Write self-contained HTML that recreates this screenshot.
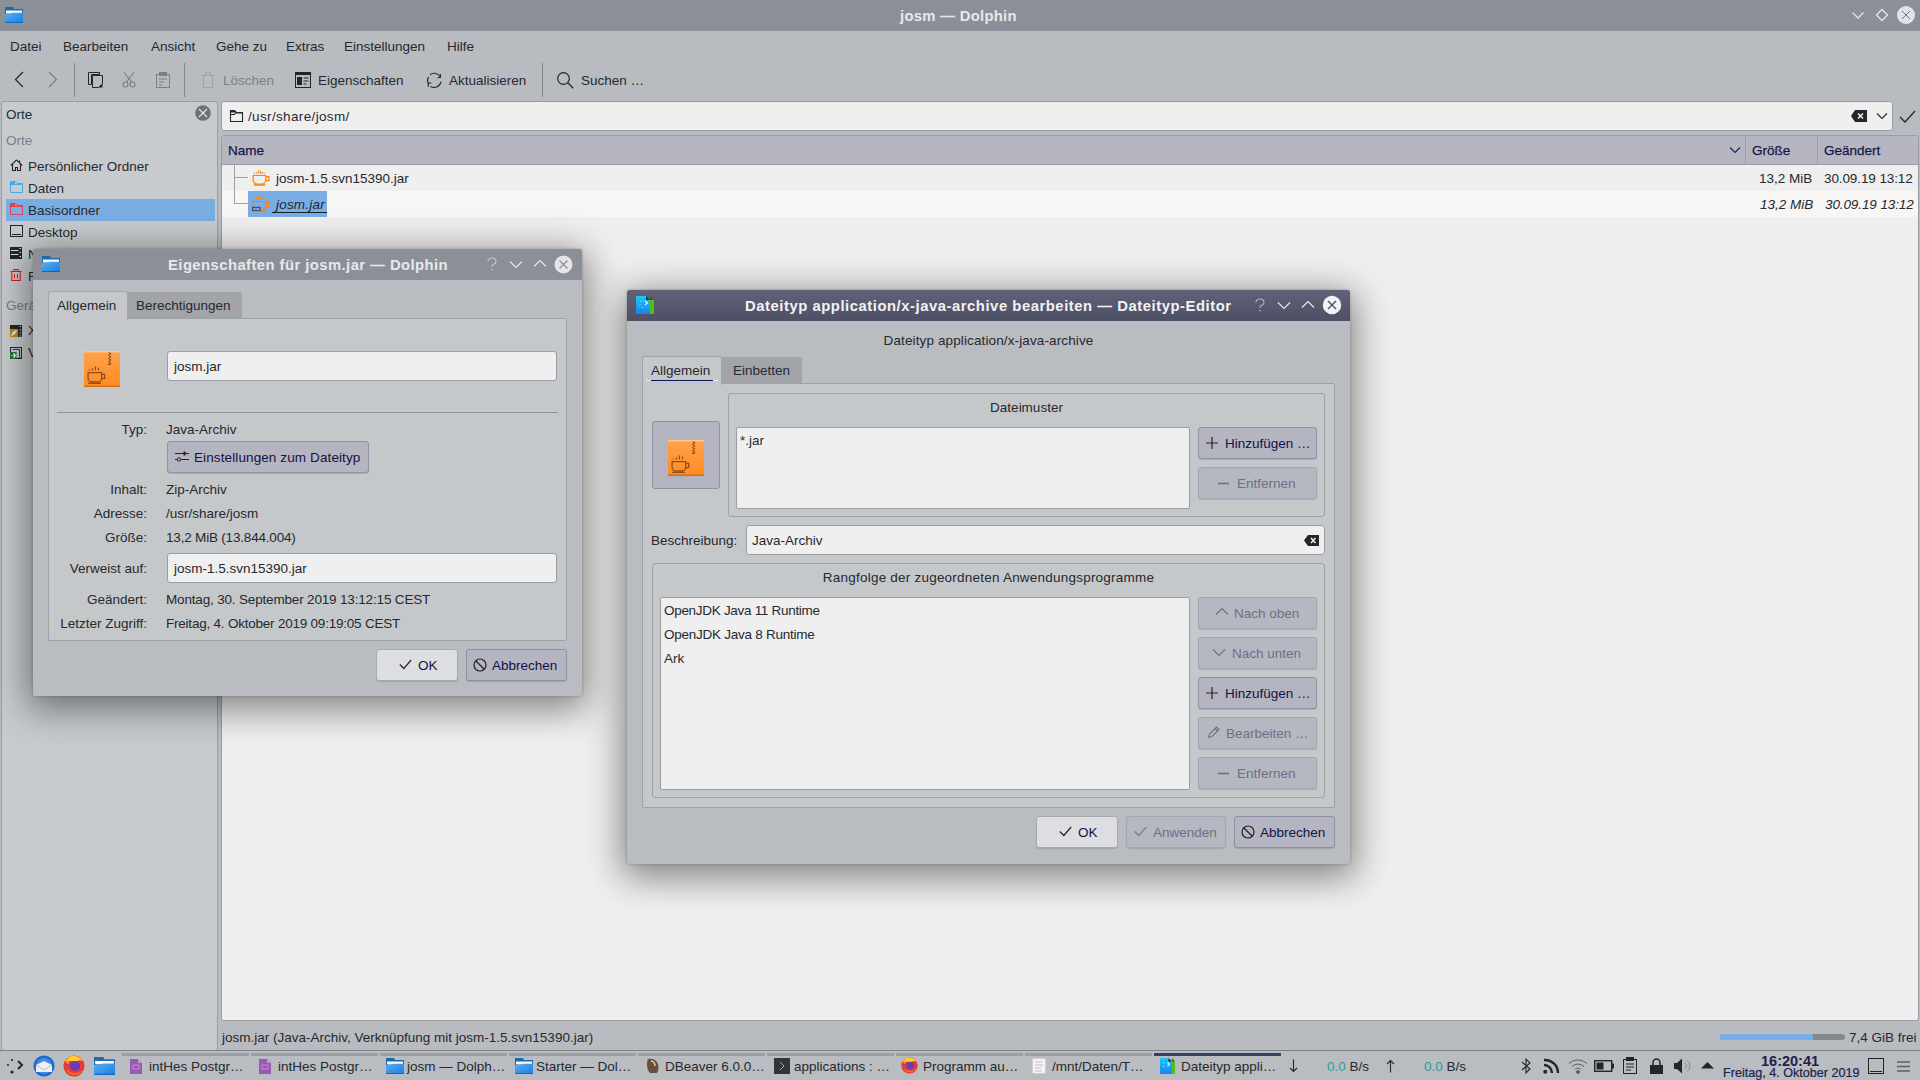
<!DOCTYPE html>
<html><head><meta charset="utf-8">
<style>
*{box-sizing:border-box;margin:0;padding:0}
html,body{width:1920px;height:1080px;overflow:hidden}
body{position:relative;background:#b8bbc0;font-family:"Liberation Sans",sans-serif;font-size:13.5px;color:#26292d}
.a{position:absolute}
.t{position:absolute;white-space:pre;line-height:18px}
svg{position:absolute;overflow:visible}
/* title bars */
.tb{position:absolute;background:#8b8f98}
.ttl{position:absolute;white-space:pre;font-weight:bold;font-size:14.8px;letter-spacing:0.3px;color:#e8e8ea;line-height:18px}
.menu .t{top:38px}
.panel{position:absolute;background:#c6c9cc;border:1px solid #a6a9ae;border-radius:3px}
.inp{position:absolute;background:#efefef;border:1px solid #9a9da3;border-radius:3px}
.btn{position:absolute;background:#b4b5c0;border:1px solid #8e90a4;border-radius:3px;box-shadow:0 1px 1px rgba(0,0,0,0.12)}
.btn.light{background:#dddee1;border-color:#a8aab0}
.btn.dis{background:#b6b8c1;border-color:#a3a5b3}
.btxt{color:#12124a}
.dis .t{color:#6c7086}
.tab{position:absolute;background:#a2a4a9;border:1px solid #a0a3a8;border-bottom:none;border-radius:3px 3px 0 0}
.tab.act{background:#c5c8cb;border-color:#a2a5aa}
.tabpanel{position:absolute;background:#c5c8cb;border:1px solid #9ea1a6;border-radius:2px}
.grp{position:absolute;border:1px solid #9ea1a6;border-radius:3px}
.hdr{color:#16164e;-webkit-text-stroke:0.25px #16164e}
.row{position:absolute;left:0;right:0;height:26px}
</style></head>
<body>
<svg width="0" height="0" style="position:absolute"><defs>
<linearGradient id="og" x1="0" y1="0" x2="0" y2="1"><stop offset="0" stop-color="#ffa24c"/><stop offset="1" stop-color="#ff8b22"/></linearGradient>
<symbol id="jar" viewBox="0 0 36 36">
<rect width="36" height="36" fill="url(#og)"/>
<rect width="36" height="1.5" fill="#ffc78c"/>
<rect y="34.5" width="36" height="1.5" fill="#d96c12"/>
<path d="M24.8 1.5l1.8 1.5-1.8 1.5 1.8 1.5-1.8 1.5 1.8 1.5-1.8 1.5 1.8 1.5-1.8 1.5h2" stroke="#8f4f18" stroke-width="1.1" fill="none"/>
<path d="M5.3 19.6v-1.2M8.4 19.6v-2.4M11.4 19.6v-4.2M14.5 19.6v-3" stroke="#8f4f18" stroke-width="1.2"/>
<path d="M4.1 21.7h13.6v5.2a4 4 0 0 1-4 4H8.1a4 4 0 0 1-4-4z" fill="none" stroke="#8f4f18" stroke-width="1.3"/>
<path d="M17.7 23.3h3v4.4h-3" fill="none" stroke="#8f4f18" stroke-width="1.3"/>
<path d="M4.8 32.3h11.5" stroke="#8f4f18" stroke-width="1.4" stroke-linecap="round"/>
</symbol>
<linearGradient id="fg" x1="0" y1="0" x2="1" y2="1"><stop offset="0" stop-color="#55aef2"/><stop offset="1" stop-color="#1a7ee3"/></linearGradient>
<symbol id="fold" viewBox="0 0 18 16">
<path d="M0 0h8l1 2h9v5H0z" fill="#1e6aa6"/>
<path d="M1 3.5h16v3H1z" fill="#fbfbfb"/>
<path d="M0 7h6l1.2-1.2H18V16H0z" fill="url(#fg)"/>
<rect x="0" y="15" width="18" height="1" fill="#1466c4"/>
</symbol><symbol id="cup" viewBox="0 0 18 18">
<path d="M2.4 4.7v-0.9M4.4 4.7v-1.8M6.7 4.7V0.9M8.7 4.7V2.1M10.7 4.7V2.9M12.4 4.7v-0.9" stroke="#ff8000" stroke-width="1.1"/>
<path d="M1.2 6.5h12.6V11a4 4 0 0 1-4 4H5.2a4 4 0 0 1-4-4z" fill="none" stroke="#ff8000" stroke-width="1.2"/>
<path d="M13.8 7.6H16.9v4h-3.1" fill="none" stroke="#ff8000" stroke-width="1.2"/>
<path d="M2.4 16h10.2" stroke="#ff8000" stroke-width="1.5" stroke-linecap="round"/>
</symbol></defs></svg>

<!-- ========== MAIN WINDOW ========== -->
<div class="tb" style="left:0;top:0;width:1920px;height:31px"></div>
<!-- app icon -->
<svg style="left:5px;top:7px" width="18" height="16"><use href="#fold"/></svg>
<div class="ttl" style="left:900px;top:7px">josm — Dolphin</div>
<!-- window buttons -->
<svg style="left:1851px;top:10px" width="14" height="10"><path d="M1.5 2.5l5.5 5.5 5.5-5.5" stroke="#e6e6e8" stroke-width="1.3" fill="none"/></svg>
<svg style="left:1875px;top:8px" width="14" height="14"><path d="M7 1.5l5.5 5.5-5.5 5.5-5.5-5.5z" stroke="#e6e6e8" stroke-width="1.3" fill="none"/></svg>
<svg style="left:1896px;top:5px" width="21" height="21"><circle cx="10" cy="10" r="9" fill="#e3e3e5"/><path d="M6 6l8 8M14 6l-8 8" stroke="#6e727a" stroke-width="1"/></svg>

<!-- menu -->
<div class="menu">
 <div class="t" style="left:10px">Datei</div>
 <div class="t" style="left:63px">Bearbeiten</div>
 <div class="t" style="left:151px">Ansicht</div>
 <div class="t" style="left:216px">Gehe zu</div>
 <div class="t" style="left:286px">Extras</div>
 <div class="t" style="left:344px">Einstellungen</div>
 <div class="t" style="left:447px">Hilfe</div>
</div>

<!-- toolbar -->
<div id="toolbar">
 <svg style="left:14px;top:71px" width="10" height="17"><path d="M9 1L1.5 8.5 9 16" stroke="#232629" stroke-width="1.2" fill="none"/></svg>
 <svg style="left:48px;top:71px" width="10" height="17"><path d="M1 1l7.5 7.5L1 16" stroke="#7c7f85" stroke-width="1.2" fill="none"/></svg>
 <div class="a" style="left:74px;top:63px;width:1px;height:34px;background:#85888d"></div>
 <svg style="left:88px;top:72px" width="15" height="16"><path d="M0.5 0.5h11v2h-8v10h-3z" fill="none" stroke="#232629" stroke-width="1"/><path d="M4.5 3.5h10v8l-4 4h-6z" fill="#b8bbc0" stroke="#232629" stroke-width="1"/><path d="M14.5 11.5v4h-4z" fill="#232629"/></svg>
 <svg style="left:122px;top:72px" width="15" height="16"><path d="M2 0.5l8 10M12 0.5l-8 10" stroke="#7c7f85" stroke-width="1.1" fill="none"/><circle cx="3.5" cy="12.5" r="2.5" fill="none" stroke="#7c7f85" stroke-width="1.1"/><circle cx="10.5" cy="12.5" r="2.5" fill="none" stroke="#7c7f85" stroke-width="1.1"/></svg>
 <svg style="left:156px;top:72px" width="14" height="16"><rect x="0.5" y="2.5" width="13" height="13" fill="none" stroke="#7c7f85"/><rect x="3" y="0" width="8" height="4" fill="#7c7f85"/><path d="M3 7h8M3 10h5M3 13h3" stroke="#7c7f85" stroke-width="1"/></svg>
 <div class="a" style="left:184px;top:63px;width:1px;height:34px;background:#85888d"></div>
 <svg style="left:201px;top:72px" width="14" height="16"><path d="M0.5 3.5h13M4.5 3.5v-2.5h5v2.5M2.5 3.5v12h9v-12" fill="none" stroke="#9fa2a8" stroke-width="1"/></svg>
 <div class="t" style="left:223px;top:72px;color:#7d8187">Löschen</div>
 <svg style="left:295px;top:72px" width="16" height="16"><rect x="0.5" y="0.5" width="15" height="15" fill="none" stroke="#232629"/><rect x="0" y="0" width="16" height="3" fill="#232629"/><rect x="2" y="5" width="5" height="8" fill="#232629"/><path d="M8.5 6h5M8.5 9h5M8.5 12h3" stroke="#232629"/></svg>
 <div class="t" style="left:318px;top:72px">Eigenschaften</div>
 <svg style="left:426px;top:72px" width="17" height="17"><path d="M4 2.8A7 7 0 0 1 14.6 5.2M15 9.5A7 7 0 0 1 4.5 14.5M2.2 11.5A7 7 0 0 1 2.5 5" fill="none" stroke="#232629" stroke-width="1.1"/><path d="M14.6 5.2l-0.2-3.2M14.6 5.2l-3 0.6M2.2 11.5l0.2 3.2M2.2 11.5l3-0.6" stroke="#232629" stroke-width="1.1"/></svg>
 <div class="t" style="left:449px;top:72px">Aktualisieren</div>
 <div class="a" style="left:542px;top:63px;width:1px;height:34px;background:#85888d"></div>
 <svg style="left:557px;top:72px" width="17" height="17"><circle cx="6.5" cy="6.5" r="5.8" fill="none" stroke="#232629" stroke-width="1.2"/><path d="M10.8 10.8l5.5 5.5" stroke="#232629" stroke-width="1.3"/></svg>
 <div class="t" style="left:581px;top:72px">Suchen …</div>
</div>

<!-- sidebar -->
<div id="sidebar">
 <div class="a" style="left:1px;top:101px;width:217px;height:950px;background:#c8cbce;border:1px solid #9a9da3;border-radius:3px"></div>
 <div class="t" style="left:6px;top:106px">Orte</div>
 <svg style="left:195px;top:105px" width="16" height="16"><circle cx="8" cy="8" r="7.8" fill="#6c7078"/><path d="M4 4l8 8M12 4l-8 8" stroke="#e3e4e6" stroke-width="1.1"/></svg>
 <div class="t" style="left:6px;top:132px;color:#7a7e84">Orte</div>
 <div class="a" style="left:6px;top:199px;width:209px;height:22px;background:#79ade3"></div>
 <svg style="left:10px;top:159px" width="13" height="12"><path d="M6.5 0.8L0.8 6.5M6.5 0.8l5.7 5.7M9.5 1.5v3M2.5 5v6.5h3v-3h2v3h3V5" fill="none" stroke="#232629" stroke-width="1.1"/></svg>
 <div class="t" style="left:28px;top:158px">Persönlicher Ordner</div>
 <svg style="left:10px;top:181px" width="13" height="12"><path d="M0.5 0.5h5l2 2h5v9h-12z" fill="none" stroke="#3daee9"/><path d="M0.5 3.5h12" stroke="#3daee9"/><path d="M1 1h4v2H1z" fill="#3daee9"/></svg>
 <div class="t" style="left:28px;top:180px">Daten</div>
 <svg style="left:10px;top:203px" width="13" height="12"><path d="M0.5 0.5h5l2 2h5v9h-12z" fill="none" stroke="#da4453"/><path d="M0.5 3.5h12" stroke="#da4453"/><path d="M1 1h4v2H1z" fill="#da4453"/></svg>
 <div class="t" style="left:28px;top:202px">Basisordner</div>
 <svg style="left:10px;top:225px" width="13" height="12"><rect x="0.5" y="0.5" width="12" height="11" fill="none" stroke="#232629"/><path d="M2 9.5h9" stroke="#232629"/></svg>
 <div class="t" style="left:28px;top:224px">Desktop</div>
 <svg style="left:10px;top:247px" width="12" height="12"><rect width="12" height="12" fill="#232629"/><path d="M1 3.5h7.5M1 7.5h7.5" stroke="#e0e0e0" stroke-width="1"/><path d="M9.5 1.5h1.5M9.5 5.5h1.5M9.5 9.5h1.5" stroke="#e0e0e0" stroke-width="1"/></svg>
 <div class="t" style="left:28px;top:246px">N</div>
 <svg style="left:10px;top:269px" width="12" height="12"><path d="M0.5 2.5h11M4 2.5V0.5h4v2M1.8 2.5v9h8.4v-9M4.5 5v4.5M7.5 5v4.5" fill="none" stroke="#da1b1b" stroke-width="1.1"/></svg>
 <div class="t" style="left:28px;top:268px">F</div>
 <div class="t" style="left:6px;top:297px;color:#7a7e84">Gerä</div>
 <svg style="left:10px;top:325px" width="12" height="12"><rect width="12" height="12" fill="#232629"/><rect x="0" y="4" width="8" height="8" fill="#b88c1c"/><path d="M1.5 10.5l5-5" stroke="#f0f0f0" stroke-width="1.4"/><circle cx="4" cy="8" r="1.4" fill="#f0f0f0"/><path d="M9.5 1.5h1.5M9.5 5h1.5M9.5 8h1.5M9.5 11h1.5" stroke="#e0e0e0"/></svg>
 <div class="t" style="left:28px;top:322px">X</div>
 <svg style="left:10px;top:347px" width="12" height="12"><rect x="0.5" y="0.5" width="11" height="11" fill="none" stroke="#232629"/><path d="M2.5 2.5h7v7" fill="none" stroke="#232629" stroke-width="0.9"/><rect x="0" y="5" width="6.5" height="7" fill="#1e7a32"/><path d="M1.5 8.5h1M4 6.8a1.8 1.8 0 0 1 0 3.4z" stroke="#f0f0f0" fill="#f0f0f0" stroke-width="1.1"/><path d="M8 11h3" stroke="#232629"/></svg>
 <div class="t" style="left:28px;top:344px">V</div>
</div>

<!-- location bar -->
<div id="loc">
 <div class="a" style="left:221px;top:101px;width:1672px;height:30px;background:#efefef;border:1px solid #9a9da3;border-radius:3px"></div>
 <svg style="left:230px;top:110px" width="13" height="12"><path d="M0.5 0.5h4l2 2h6v9h-12z" fill="none" stroke="#232629" stroke-width="1.1"/><path d="M0 0h4.5l2 2.5H0z" fill="#232629"/><path d="M0.5 4.5h4l1-1.5h7" stroke="#232629" stroke-width="1.1" fill="none"/></svg>
 <div class="t" style="left:248px;top:108px;letter-spacing:0.35px">/usr/share/josm/</div>
 <svg style="left:1851px;top:110px" width="16" height="12"><path d="M0 6l4-6h12v12H4z" fill="#232629"/><path d="M7 3.5l5 5M12 3.5l-5 5" stroke="#efefef" stroke-width="1.6"/></svg>
 <svg style="left:1876px;top:112px" width="12" height="8"><path d="M1 1.5l5 5 5-5" stroke="#232629" stroke-width="1.1" fill="none"/></svg>
 <svg style="left:1899px;top:110px" width="17" height="13"><path d="M1 7l5 5L16 1" stroke="#232629" stroke-width="1.3" fill="none"/></svg>
</div>

<!-- file panel -->
<div id="files">
 <div class="a" style="left:221px;top:135px;width:1698px;height:886px;background:#efefef;border:1px solid #9a9da3;border-radius:3px;overflow:hidden">
  <div class="a" style="left:0;top:0;width:1697px;height:29px;background:#b5b6bf;border-bottom:1px solid #9a9ca6"></div>
  <div class="a" style="left:1523px;top:0;width:1px;height:29px;background:#9c9eaa"></div>
  <div class="a" style="left:1595px;top:0;width:1px;height:29px;background:#9c9eaa"></div>
  <div class="a" style="left:0;top:55px;width:1697px;height:26px;background:#f7f6f4"></div>
 </div>
 <div class="t hdr" style="left:228px;top:142px">Name</div>
 <svg style="left:1729px;top:146px" width="12" height="8"><path d="M1 1.5l5 5 5-5" stroke="#1d1d5b" stroke-width="1.1" fill="none"/></svg>
 <div class="t hdr" style="left:1752px;top:142px">Größe</div>
 <div class="t hdr" style="left:1824px;top:142px">Geändert</div>
 <div class="a" style="left:234px;top:165px;width:1px;height:38px;background:#9ea1a6"></div>
 <div class="a" style="left:234px;top:177px;width:14px;height:1px;background:#9ea1a6"></div>
 <div class="a" style="left:234px;top:203px;width:14px;height:1px;background:#9ea1a6"></div>
 <svg style="left:252px;top:169px" width="18" height="18"><use href="#cup"/></svg>
 <div class="t" style="left:276px;top:170px">josm-1.5.svn15390.jar</div>
 <div class="t" style="left:1759px;top:170px">13,2 MiB</div>
 <div class="t" style="left:1824px;top:170px;letter-spacing:-0.1px">30.09.19 13:12</div>
 <div class="a" style="left:248px;top:191px;width:79px;height:26px;background:#79ade5"></div>
 <svg style="left:252px;top:195px" width="18" height="18"><use href="#cup"/><rect x="0.5" y="12.3" width="7.5" height="3.4" fill="#6b8fb8" stroke="#3d4248" stroke-width="0.9"/><path d="M2 14h1M5 14h1.5" stroke="#d8e4f0" stroke-width="0.9"/></svg>
 <div class="t" style="left:276px;top:196px;font-style:italic;color:#232629;letter-spacing:0.2px">josm.jar</div>
 <div class="a" style="left:272px;top:212px;width:55px;height:1px;background:#1d2024"></div>
 <div class="t" style="left:1760px;top:196px;font-style:italic">13,2 MiB</div>
 <div class="t" style="left:1825px;top:196px;font-style:italic;letter-spacing:-0.1px">30.09.19 13:12</div>
</div>

<!-- status bar -->
<div id="status">
 <div class="t" style="left:222px;top:1029px">josm.jar (Java-Archiv, Verknüpfung mit josm-1.5.svn15390.jar)</div>
 <div class="a" style="left:1720px;top:1034px;width:125px;height:6px;background:#85888e;border-radius:3px"></div>
 <div class="a" style="left:1720px;top:1034px;width:93px;height:6px;background:#79ade5;border-radius:3px 0 0 3px"></div>
 <div class="t" style="left:1849px;top:1029px">7,4 GiB frei</div>
</div>

<!-- taskbar -->
<div id="taskbar">
<div class="a" style="left:0;top:1050px;width:1920px;height:1px;background:#7f8287"></div>
<div class="a" style="left:0;top:1051px;width:1920px;height:29px;background:#b9bcc1"></div>
<svg style="left:6px;top:1057px" width="17" height="17"><circle cx="2" cy="8" r="1" fill="#232629"/><circle cx="6" cy="3" r="1.1" fill="#232629"/><circle cx="6" cy="15" r="1.6" fill="#232629"/><path d="M12 4l4 4-4 4" stroke="#232629" stroke-width="2" fill="none"/></svg>
<svg style="left:33px;top:1055px" width="22" height="22"><circle cx="11" cy="11" r="10.5" fill="#1f6ac8"/><circle cx="11" cy="11" r="8" fill="#3c8ee8"/><path d="M3 10l8-4 8 4v7H3z" fill="#f0f0f0"/><path d="M3 10l8 5 8-5" stroke="#aab" fill="none" stroke-width="0.8"/></svg>
<svg style="left:63px;top:1055px" width="22" height="22" viewBox="0 0 22 22"><circle cx="11" cy="11" r="10.5" fill="#ff9a1f"/><path d="M11 0.5A10.5 10.5 0 0 1 21.5 11 10.5 10.5 0 0 1 11 21.5 10.5 10.5 0 0 1 0.5 11c0-2 .6-4 1.6-5.6C3 8 5 9 6 9c-1-2 0-5 2-6 3 0 6 1 7 3 2 2 2 5 1 7-1 3-4 4-7 4-3 0-5-2-6-4" fill="#e23b3e"/><circle cx="12" cy="11" r="5" fill="#6a3cb8"/><path d="M4 6c1-3 4-5 7-5 4 0 7 2 9 5-2-1-4-1-6 0" fill="#ffcf33"/><path d="M3 14c1 4 5 6 9 6 4 0 7-3 8-6-2 3-5 4-8 4-4 0-7-2-9-4z" fill="#ff6a1f"/></svg>
<svg style="left:94px;top:1057px" width="21" height="18" viewBox="0 0 18 16" preserveAspectRatio="none"><use href="#fold"/></svg>
<div class="a" style="left:122px;top:1053px;width:127px;height:3px;background:#9c9ea3"></div>
<svg style="left:130px;top:1059px" width="12" height="15"><path d="M0 0h8l4 4v11H0z" fill="#9b59b6"/><path d="M8 0v4h4z" fill="#c39bd3"/><rect x="3" y="6" width="6" height="4" fill="none" stroke="#c39bd3" stroke-width="0.8"/></svg>
<div class="t" style="left:149px;top:1058px">intHes Postgr…</div>
<div class="a" style="left:251px;top:1053px;width:127px;height:3px;background:#9c9ea3"></div>
<svg style="left:259px;top:1059px" width="12" height="15"><path d="M0 0h8l4 4v11H0z" fill="#9b59b6"/><path d="M8 0v4h4z" fill="#c39bd3"/><rect x="3" y="6" width="6" height="4" fill="none" stroke="#c39bd3" stroke-width="0.8"/></svg>
<div class="t" style="left:278px;top:1058px">intHes Postgr…</div>
<div class="a" style="left:380px;top:1053px;width:127px;height:3px;background:#9c9ea3"></div>
<svg style="left:386px;top:1058px" width="18" height="16"><use href="#fold"/></svg>
<div class="t" style="left:407px;top:1058px">josm — Dolph…</div>
<div class="a" style="left:509px;top:1053px;width:127px;height:3px;background:#9c9ea3"></div>
<svg style="left:515px;top:1058px" width="18" height="16"><use href="#fold"/></svg>
<div class="t" style="left:536px;top:1058px">Starter — Dol…</div>
<div class="a" style="left:638px;top:1053px;width:127px;height:3px;background:#9c9ea3"></div>
<svg style="left:645px;top:1058px" width="16" height="16"><path d="M3 1c3-1 7 0 9 3 2 3 2 8 0 11H5C2 12 1 6 3 1z" fill="#6b4f3a"/><path d="M6 3c2 0 4 2 4 5" stroke="#e8d8c0" stroke-width="1.5" fill="none"/></svg>
<div class="t" style="left:665px;top:1058px">DBeaver 6.0.0…</div>
<div class="a" style="left:767px;top:1053px;width:127px;height:3px;background:#9c9ea3"></div>
<svg style="left:774px;top:1058px" width="16" height="16"><rect width="16" height="16" fill="#31363b"/><path d="M6 4l4 4-4 4" stroke="#aaa" fill="none" stroke-width="1"/></svg>
<div class="t" style="left:794px;top:1058px">applications : …</div>
<div class="a" style="left:896px;top:1053px;width:127px;height:3px;background:#9c9ea3"></div>
<svg style="left:901px;top:1057px" width="17" height="17" viewBox="0 0 22 22"><circle cx="11" cy="11" r="10.5" fill="#ff9a1f"/><path d="M11 0.5A10.5 10.5 0 0 1 21.5 11 10.5 10.5 0 0 1 11 21.5 10.5 10.5 0 0 1 0.5 11c0-2 .6-4 1.6-5.6C3 8 5 9 6 9c-1-2 0-5 2-6 3 0 6 1 7 3 2 2 2 5 1 7-1 3-4 4-7 4-3 0-5-2-6-4" fill="#e23b3e"/><circle cx="12" cy="11" r="5" fill="#6a3cb8"/><path d="M4 6c1-3 4-5 7-5 4 0 7 2 9 5-2-1-4-1-6 0" fill="#ffcf33"/><path d="M3 14c1 4 5 6 9 6 4 0 7-3 8-6-2 3-5 4-8 4-4 0-7-2-9-4z" fill="#ff6a1f"/></svg>
<div class="t" style="left:923px;top:1058px">Programm au…</div>
<div class="a" style="left:1025px;top:1053px;width:127px;height:3px;background:#9c9ea3"></div>
<svg style="left:1032px;top:1058px" width="15" height="16"><rect x="0.5" y="0.5" width="13" height="15" fill="#f4f4f4" stroke="#ccc"/><path d="M3 4h7M3 7h8M3 10h6M3 13h7" stroke="#c8a0d8" stroke-width="0.8"/></svg>
<div class="t" style="left:1052px;top:1058px">/mnt/Daten/T…</div>
<div class="a" style="left:1154px;top:1053px;width:127px;height:3px;background:#34406c"></div>
<svg style="left:1160px;top:1058px" width="15" height="16"><defs><linearGradient id="mg2" x1="0" y1="0" x2="0" y2="1"><stop offset="0" stop-color="#1ec8f5"/><stop offset="1" stop-color="#1a82f0"/></linearGradient></defs><path d="M0 0h8.5l3.5 3.5V16H0z" fill="url(#mg2)"/><rect x="12" y="3.5" width="3" height="12.5" fill="#4cc018"/><path d="M8.5 0l3.5 3.5H8.5z" fill="#2a2a30"/><path d="M12 0l3 3.5h-3z" fill="#3a5a20"/><path d="M7.5 4.5l2 1.8-2 1.8" stroke="#e8f4ff" stroke-width="1.1" fill="none"/><circle cx="4" cy="5" r="0.6" fill="#d0ecff"/><circle cx="3.5" cy="8.5" r="0.6" fill="#d0ecff"/></svg>
<div class="t" style="left:1181px;top:1058px">Dateityp appli…</div>
<svg style="left:1289px;top:1059px" width="9" height="14"><path d="M4.5 0.5v12M1 9l3.5 3.5L8 9" stroke="#232629" stroke-width="1.1" fill="none"/></svg>
<div class="t" style="left:1327px;top:1058px"><span style="color:#2a9c9a">0.0</span> B/s</div>
<svg style="left:1386px;top:1059px" width="9" height="14"><path d="M4.5 13.5v-12M1 5l3.5-3.5L8 5" stroke="#232629" stroke-width="1.1" fill="none"/></svg>
<div class="t" style="left:1424px;top:1058px"><span style="color:#2a9c9a">0.0</span> B/s</div>
<svg style="left:1521px;top:1058px" width="11" height="16"><path d="M1 4l8 7-4 4V1l4 4-8 7" stroke="#232629" stroke-width="1.1" fill="none"/></svg>
<svg style="left:1543px;top:1058px" width="18" height="16"><circle cx="2.2" cy="13.8" r="2" fill="#232629"/><path d="M1 7a8 8 0 0 1 8 8M1 2a13 13 0 0 1 14 13" stroke="#232629" stroke-width="2.4" fill="none"/></svg>
<svg style="left:1568px;top:1058px" width="20" height="16"><path d="M1 5.5a13 13 0 0 1 18 0M4 8.5a8.5 8.5 0 0 1 12 0M7 11.5a4 4 0 0 1 6 0" stroke="#5b5e63" stroke-width="1" fill="none"/><circle cx="10" cy="14" r="1.3" fill="none" stroke="#232629"/></svg>
<svg style="left:1594px;top:1060px" width="20" height="12"><rect x="0.7" y="0.7" width="17" height="10.6" fill="none" stroke="#232629" stroke-width="1.4"/><rect x="2.5" y="2.5" width="7" height="7" fill="#232629"/><rect x="18" y="3.5" width="2" height="5" fill="#232629"/></svg>
<svg style="left:1623px;top:1057px" width="14" height="17"><rect x="0.5" y="2.5" width="13" height="14" fill="none" stroke="#232629"/><rect x="3" y="0" width="8" height="4" fill="#232629"/><path d="M3 7h8M3 10h8M3 13h5" stroke="#232629"/></svg>
<svg style="left:1650px;top:1058px" width="13" height="16"><path d="M3 7V4.5a3.5 3.5 0 0 1 7 0V7" stroke="#232629" stroke-width="1.5" fill="none"/><rect x="0" y="7" width="13" height="9" fill="#232629"/></svg>
<svg style="left:1674px;top:1058px" width="17" height="16"><path d="M0 5h3l5-4.5v15L3 11H0z" fill="#232629"/><path d="M11 5a4 4 0 0 1 0 6M13.5 2.5a7.5 7.5 0 0 1 0 11" stroke="#8a8d92" stroke-width="1" fill="none"/></svg>
<svg style="left:1701px;top:1062px" width="13" height="7"><path d="M0 6.5L6.5 0 13 6.5z" fill="#232629"/></svg>
<div class="t" style="left:1761px;top:1053px;font-weight:bold;font-size:14.5px;color:#1e2148;line-height:16px">16:20:41</div>
<div class="t" style="left:1723px;top:1065px;font-size:12.6px;color:#1e2148;line-height:16px;-webkit-text-stroke:0.2px #1e2148">Freitag, 4. Oktober 2019</div>
<svg style="left:1868px;top:1058px" width="17" height="16"><rect x="0.5" y="0.5" width="15" height="15" fill="none" stroke="#232629"/><path d="M2 13.5h12" stroke="#232629"/></svg>
<svg style="left:1897px;top:1061px" width="13" height="11"><path d="M0 1h13M0 5.5h13M0 10h13" stroke="#5b5e63" stroke-width="1.4"/></svg>
</div>

<!-- dialog 1 -->
<div id="dlg1">
 <div class="a" style="left:33px;top:249px;width:549px;height:447px;background:#b9bcc0;border-radius:3px 3px 2px 2px;box-shadow:0 8px 36px 5px rgba(0,0,0,0.46),0 0 3px rgba(0,0,0,0.25)"></div>
 <div class="tb" style="left:33px;top:249px;width:549px;height:31px;border-radius:3px 3px 0 0"></div>
 <svg style="left:42px;top:256px" width="18" height="16"><use href="#fold"/></svg>
 <div class="ttl" style="left:168px;top:256px;letter-spacing:0.45px">Eigenschaften für josm.jar — Dolphin</div>
 <svg style="left:487px;top:258px" width="10" height="13"><path d="M1 3.5A4 3.3 0 1 1 6 6.5C5 7 5 7.8 5 9" stroke="#c8cace" stroke-width="1.1" fill="none"/><circle cx="5" cy="11.6" r="0.8" fill="#c8cace"/></svg>
 <svg style="left:509px;top:260px" width="14" height="9"><path d="M1 1.5l6 6 6-6" stroke="#e6e6e8" stroke-width="1.2" fill="none"/></svg>
 <svg style="left:533px;top:259px" width="14" height="9"><path d="M1 7.5l6-6 6 6" stroke="#e6e6e8" stroke-width="1.2" fill="none"/></svg>
 <svg style="left:554px;top:255px" width="19" height="19"><circle cx="9.5" cy="9.5" r="9" fill="#e6e6e8"/><path d="M5.5 5.5l8 8M13.5 5.5l-8 8" stroke="#8b8f98" stroke-width="1.3"/></svg>

 <div class="tab" style="left:127px;top:292px;width:115px;height:27px"></div>
 <div class="tabpanel" style="left:48px;top:318px;width:519px;height:323px"></div>
 <div class="tab act" style="left:48px;top:291px;width:80px;height:29px;border-bottom:none"></div>
 <div class="t" style="left:57px;top:297px">Allgemein</div>
 <div class="t" style="left:136px;top:297px">Berechtigungen</div>

 <svg style="left:84px;top:351px" width="36" height="36"><use href="#jar"/></svg>
 <div class="inp" style="left:167px;top:351px;width:390px;height:30px"></div>
 <div class="t" style="left:174px;top:358px">josm.jar</div>
 <div class="a" style="left:57px;top:412px;width:501px;height:1px;background:#8e9197"></div>

 <div class="t" style="left:0;top:421px;width:147px;text-align:right">Typ:</div>
 <div class="t" style="left:166px;top:421px">Java-Archiv</div>
 <div class="btn" style="left:167px;top:441px;width:202px;height:32px"></div>
 <svg style="left:175px;top:450px" width="14" height="13"><path d="M0 3.5h14M0 9.5h14" stroke="#232629" stroke-width="1"/><rect x="8.5" y="1.5" width="2" height="4" fill="#232629"/><circle cx="4" cy="9.5" r="1.7" fill="#b4b5c0" stroke="#232629"/></svg>
 <div class="t btxt" style="left:194px;top:449px;letter-spacing:0.11px">Einstellungen zum Dateityp</div>

 <div class="t" style="left:0;top:481px;width:147px;text-align:right">Inhalt:</div>
 <div class="t" style="left:166px;top:481px">Zip-Archiv</div>
 <div class="t" style="left:0;top:505px;width:147px;text-align:right">Adresse:</div>
 <div class="t" style="left:166px;top:505px">/usr/share/josm</div>
 <div class="t" style="left:0;top:529px;width:147px;text-align:right">Größe:</div>
 <div class="t" style="left:166px;top:529px;letter-spacing:-0.19px">13,2 MiB (13.844.004)</div>
 <div class="t" style="left:0;top:560px;width:147px;text-align:right">Verweist auf:</div>
 <div class="inp" style="left:167px;top:553px;width:390px;height:30px"></div>
 <div class="t" style="left:174px;top:560px">josm-1.5.svn15390.jar</div>
 <div class="t" style="left:0;top:591px;width:147px;text-align:right">Geändert:</div>
 <div class="t" style="left:166px;top:591px;letter-spacing:-0.17px">Montag, 30. September 2019 13:12:15 CEST</div>
 <div class="t" style="left:0;top:615px;width:147px;text-align:right">Letzter Zugriff:</div>
 <div class="t" style="left:166px;top:615px;letter-spacing:-0.22px">Freitag, 4. Oktober 2019 09:19:05 CEST</div>

 <div class="btn light" style="left:376px;top:649px;width:82px;height:32px"></div>
 <svg style="left:399px;top:659px" width="13" height="11"><path d="M0.8 5.5l4 4L12.2 1" stroke="#232629" stroke-width="1.2" fill="none"/></svg>
 <div class="t btxt" style="left:418px;top:657px">OK</div>
 <div class="btn" style="left:466px;top:649px;width:101px;height:32px"></div>
 <svg style="left:473px;top:658px" width="14" height="14"><circle cx="7" cy="7" r="6" fill="none" stroke="#232629" stroke-width="1.2"/><path d="M3 3l8 8" stroke="#232629" stroke-width="1.2"/></svg>
 <div class="t btxt" style="left:492px;top:657px">Abbrechen</div>
</div>

<!-- dialog 2 -->
<div id="dlg2">
 <div class="a" style="left:627px;top:290px;width:723px;height:574px;background:#b9bcc0;border-radius:3px 3px 2px 2px;box-shadow:0 8px 36px 5px rgba(0,0,0,0.46),0 0 3px rgba(0,0,0,0.25)"></div>
 <div class="a" style="left:627px;top:290px;width:723px;height:31px;border-radius:3px 3px 0 0;background:linear-gradient(#616279,#4d4f64)"></div>
 <svg style="left:636px;top:296px" width="18" height="18"><defs><linearGradient id="mg" x1="0" y1="0" x2="0" y2="1"><stop offset="0" stop-color="#1ec8f5"/><stop offset="1" stop-color="#1a82f0"/></linearGradient></defs><path d="M0 0h10l4 4v14H0z" fill="url(#mg)"/><rect x="14" y="4" width="4" height="14" fill="#4cc018"/><path d="M10 0l4 4h-4z" fill="#2a2a30"/><path d="M14 0l4 4h-4z" fill="#3a5a20"/><rect x="14" y="0" width="0.1" height="0"/><path d="M9 5l2.5 2-2.5 2" stroke="#e8f4ff" stroke-width="1.2" fill="none"/><circle cx="5" cy="5.5" r="0.6" fill="#d0ecff"/><circle cx="4" cy="9" r="0.6" fill="#d0ecff"/><circle cx="6.5" cy="11.5" r="0.6" fill="#d0ecff"/></svg>
 <div class="ttl" style="left:745px;top:297px;letter-spacing:0.55px;color:#f2f2f4">Dateityp application/x-java-archive bearbeiten — Dateityp-Editor</div>
 <svg style="left:1255px;top:299px" width="10" height="13"><path d="M1 3.5A4 3.3 0 1 1 6 6.5C5 7 5 7.8 5 9" stroke="#b4b6c0" stroke-width="1.1" fill="none"/><circle cx="5" cy="11.6" r="0.8" fill="#b4b6c0"/></svg>
 <svg style="left:1277px;top:301px" width="14" height="9"><path d="M1 1.5l6 6 6-6" stroke="#e8e8ec" stroke-width="1.2" fill="none"/></svg>
 <svg style="left:1301px;top:300px" width="14" height="9"><path d="M1 7.5l6-6 6 6" stroke="#e8e8ec" stroke-width="1.2" fill="none"/></svg>
 <svg style="left:1322px;top:295px" width="20" height="20"><circle cx="10" cy="10" r="9.2" fill="#f2f2f4"/><path d="M6 6l8 8M14 6l-8 8" stroke="#4f5166" stroke-width="1.4"/></svg>

 <div class="t" style="left:627px;top:332px;width:723px;text-align:center;letter-spacing:0.12px">Dateityp application/x-java-archive</div>

 <div class="tab" style="left:721px;top:357px;width:81px;height:27px"></div>
 <div class="tabpanel" style="left:642px;top:383px;width:693px;height:425px"></div>
 <div class="tab act" style="left:642px;top:356px;width:80px;height:29px"></div>
 <div class="t" style="left:651px;top:362px">Allgemein</div>
 <div class="a" style="left:646px;top:380px;width:5px;height:1px;background:#ececec"></div><div class="a" style="left:651px;top:380px;width:62px;height:1px;background:#0d1860"></div>
 <div class="a" style="left:713px;top:380px;width:5px;height:1px;background:#e8e8e8"></div>
 <div class="t" style="left:733px;top:362px">Einbetten</div>

 <div class="btn" style="left:652px;top:421px;width:68px;height:68px;box-shadow:none;border-color:#8e90a4;background:#b3b4bf"></div>
 <svg style="left:668px;top:440px" width="36" height="36"><use href="#jar"/></svg>

 <div class="grp" style="left:728px;top:393px;width:597px;height:124px"></div>
 <div class="t" style="left:728px;top:399px;width:597px;text-align:center">Dateimuster</div>
 <div class="inp" style="left:736px;top:427px;width:454px;height:82px;border-radius:2px"></div>
 <div class="t" style="left:740px;top:432px">*.jar</div>
 <div class="btn" style="left:1198px;top:427px;width:119px;height:32px"></div>
 <svg style="left:1206px;top:437px" width="12" height="12"><path d="M6 0v12M0 6h12" stroke="#232629" stroke-width="1.2"/></svg>
 <div class="t btxt" style="left:1225px;top:435px">Hinzufügen …</div>
 <div class="btn dis" style="left:1198px;top:467px;width:119px;height:32px"><div class="t" style="left:67px;top:7px"></div></div>
 <svg style="left:1218px;top:482px" width="12" height="3"><path d="M0 1.5h11" stroke="#6c7086" stroke-width="1.6"/></svg>
 <div class="t" style="left:1237px;top:475px;color:#6c7086">Entfernen</div>

 <div class="t" style="left:651px;top:532px">Beschreibung:</div>
 <div class="inp" style="left:746px;top:525px;width:579px;height:30px"></div>
 <div class="t" style="left:752px;top:532px">Java-Archiv</div>
 <svg style="left:1304px;top:535px" width="15" height="11"><path d="M0 5.5L4 0h11v11H4z" fill="#232629"/><path d="M7 3l4.5 5M11.5 3L7 8" stroke="#efefef" stroke-width="1.5"/></svg>

 <div class="grp" style="left:652px;top:563px;width:673px;height:235px"></div>
 <div class="t" style="left:652px;top:569px;width:673px;text-align:center;letter-spacing:0.22px">Rangfolge der zugeordneten Anwendungsprogramme</div>
 <div class="inp" style="left:660px;top:597px;width:530px;height:193px;border-radius:2px"></div>
 <div class="t" style="left:664px;top:602px;letter-spacing:-0.3px">OpenJDK Java 11 Runtime</div>
 <div class="t" style="left:664px;top:626px;letter-spacing:-0.25px">OpenJDK Java 8 Runtime</div>
 <div class="t" style="left:664px;top:650px">Ark</div>

 <div class="btn dis" style="left:1198px;top:597px;width:119px;height:32px"></div>
 <svg style="left:1215px;top:607px" width="14" height="9"><path d="M1 7.5l6-6 6 6" stroke="#6c7086" stroke-width="1.1" fill="none"/></svg>
 <div class="t" style="left:1234px;top:605px;color:#6c7086">Nach oben</div>
 <div class="btn dis" style="left:1198px;top:637px;width:119px;height:32px"></div>
 <svg style="left:1212px;top:648px" width="14" height="9"><path d="M1 1.5l6 6 6-6" stroke="#6c7086" stroke-width="1.1" fill="none"/></svg>
 <div class="t" style="left:1232px;top:645px;color:#6c7086">Nach unten</div>
 <div class="btn" style="left:1198px;top:677px;width:119px;height:32px"></div>
 <svg style="left:1206px;top:687px" width="12" height="12"><path d="M6 0v12M0 6h12" stroke="#232629" stroke-width="1.2"/></svg>
 <div class="t btxt" style="left:1225px;top:685px">Hinzufügen …</div>
 <div class="btn dis" style="left:1198px;top:717px;width:119px;height:32px"></div>
 <svg style="left:1207px;top:726px" width="13" height="13"><path d="M1.5 11.5l1-3.5 7-7 2.5 2.5-7 7z" fill="none" stroke="#6c7086" stroke-width="1.1"/><path d="M8 2.5l2.5 2.5" stroke="#6c7086" stroke-width="1.1"/></svg>
 <div class="t" style="left:1226px;top:725px;color:#6c7086">Bearbeiten …</div>
 <div class="btn dis" style="left:1198px;top:757px;width:119px;height:32px"></div>
 <svg style="left:1218px;top:772px" width="12" height="3"><path d="M0 1.5h11" stroke="#6c7086" stroke-width="1.6"/></svg>
 <div class="t" style="left:1237px;top:765px;color:#6c7086">Entfernen</div>

 <div class="btn light" style="left:1036px;top:816px;width:82px;height:32px"></div>
 <svg style="left:1059px;top:826px" width="13" height="11"><path d="M0.8 5.5l4 4L12.2 1" stroke="#232629" stroke-width="1.2" fill="none"/></svg>
 <div class="t btxt" style="left:1078px;top:824px">OK</div>
 <div class="btn dis" style="left:1126px;top:816px;width:100px;height:32px"></div>
 <svg style="left:1134px;top:826px" width="13" height="11"><path d="M0.8 5.5l4 4L12.2 1" stroke="#6c7086" stroke-width="1.1" fill="none"/></svg>
 <div class="t" style="left:1153px;top:824px;color:#6c7086">Anwenden</div>
 <div class="btn" style="left:1234px;top:816px;width:101px;height:32px"></div>
 <svg style="left:1241px;top:825px" width="14" height="14"><circle cx="7" cy="7" r="6" fill="none" stroke="#232629" stroke-width="1.2"/><path d="M3 3l8 8" stroke="#232629" stroke-width="1.2"/></svg>
 <div class="t btxt" style="left:1260px;top:824px">Abbrechen</div>
</div>

</body></html>
